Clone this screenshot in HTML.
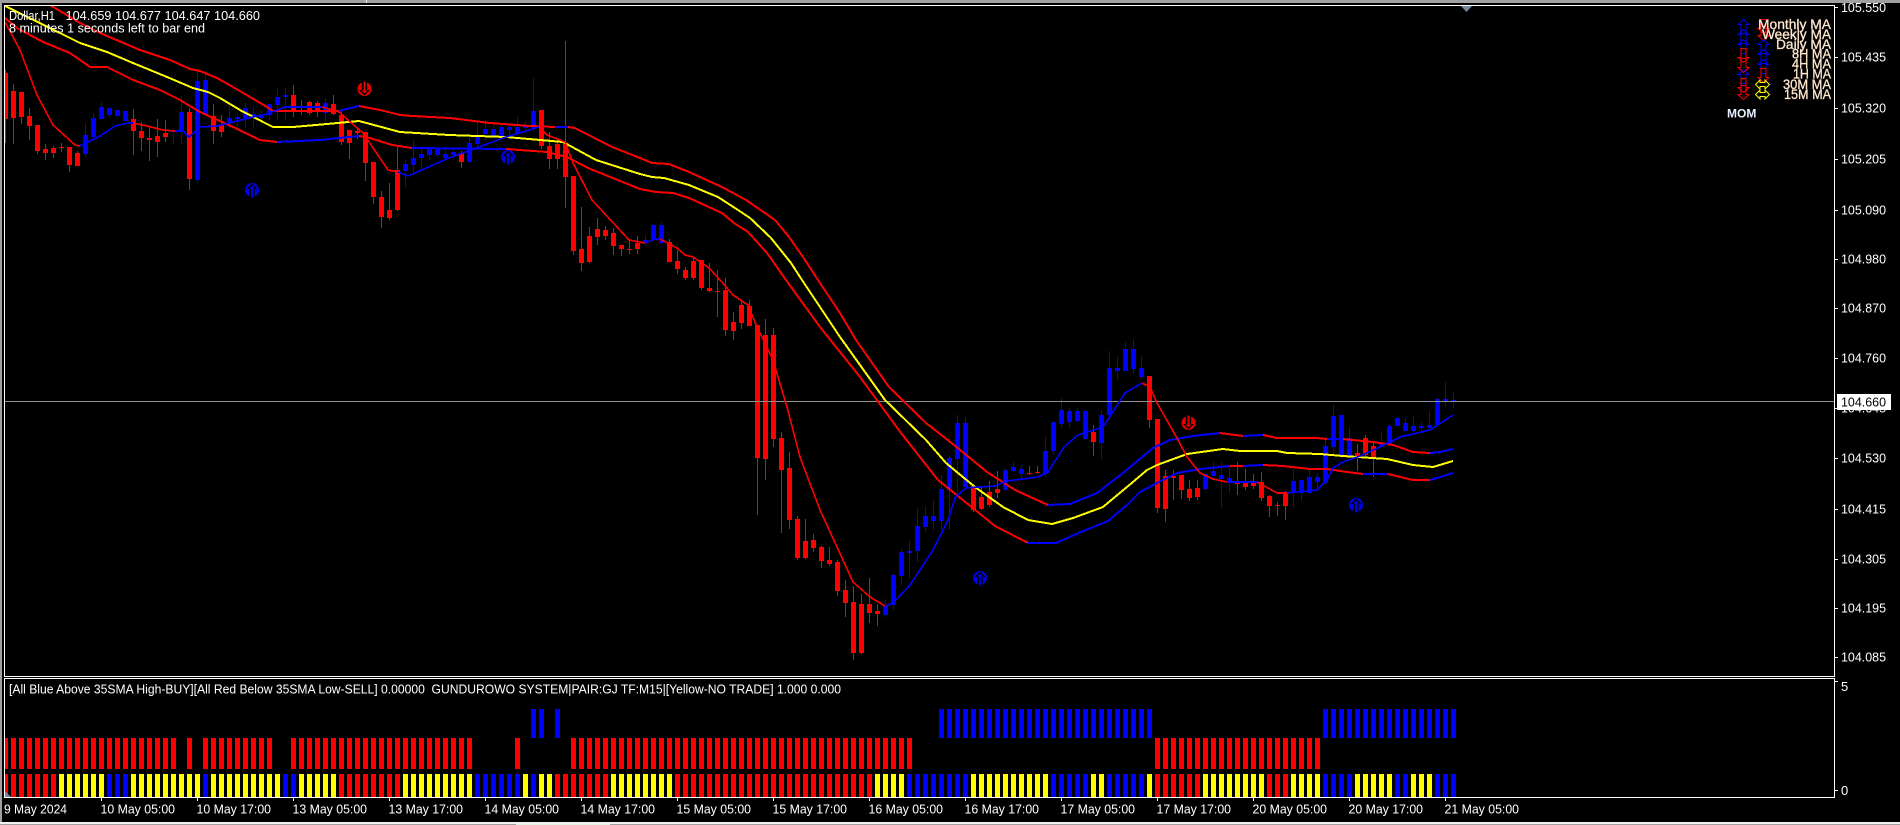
<!DOCTYPE html>
<html lang="en">
<head>
<meta charset="utf-8">
<title>Dollar,H1</title>
<style>
html,body{margin:0;padding:0;background:#000;width:1900px;height:825px;overflow:hidden}
svg{display:block}
text{font-family:"Liberation Sans",sans-serif;font-size:13px;fill:#fff}
</style>
</head>
<body>
<svg width="1900" height="825" viewBox="0 0 1900 825" xmlns="http://www.w3.org/2000/svg">
<defs>
<clipPath id="main"><rect x="5" y="6" width="1829" height="670"/></clipPath>
<clipPath id="sub"><rect x="5" y="679" width="1829" height="118"/></clipPath>
<g id="cu"><circle r="7" fill="#0000e6"/><path d="M0-6.5 5.5-1H2.7V7.5H-2.7V-1H-5.5Z" fill="#000"/><path d="M0-4.5 3-1.5H1V7.5H-1V-1.5H-3Z" fill="#0000e6"/></g>
<g id="cd"><circle r="7" fill="#e60000"/><path d="M0 6.5 5.5 1H2.7V-7.5H-2.7V1H-5.5Z" fill="#000"/><path d="M0 4.5 3 1.5H1V-7.5H-1V1.5H-3Z" fill="#e60000"/></g>
<path id="au" d="M0-7 5.5-2H2.5V7H-2.5V-2H-5.5Z" fill="none" stroke="#0000ff"/>
<path id="ad" d="M0 7 5.5 2H2.5V-7H-2.5V2H-5.5Z" fill="none" stroke="#ff0000"/>
<path id="ay" d="M-7 0-2.5-4.5V-2H2.5V-4.5L7 0 2.5 4.5V2H-2.5V4.5Z" fill="none" stroke="#ffff00"/>
</defs>

<!-- window chrome -->
<rect x="0" y="0" width="1900" height="3" fill="#a0a0a0"/>
<rect x="366" y="0" width="1" height="3" fill="#e8e8e8"/>
<rect x="0" y="0" width="2" height="825" fill="#a0a0a0"/>
<rect x="0" y="822" width="1900" height="2" fill="#f0f0f0"/>
<rect x="0" y="824" width="1900" height="1" fill="#a0a0a0"/>
<rect x="516" y="824" width="94" height="1" fill="#e0f0e0"/>

<!-- sub window bars -->
<g clip-path="url(#sub)" shape-rendering="crispEdges" fill="none">
<g stroke="#ff0000" stroke-width="31" stroke-dasharray="5 3">
<path d="M3 753.5H176M187 753.5H192M203 753.5H272M291 753.5H472M515 753.5H520M571 753.5H912M1155 753.5H1320"/>
</g>
<g stroke="#0000ff" stroke-width="29" stroke-dasharray="5 3">
<path d="M531 723.5H536M539 723.5H544M555 723.5H560M939 723.5H1152M1323 723.5H1456"/>
</g>
<g stroke-width="24" stroke-dasharray="5 3">
<path stroke="#ff0000" d="M3 786H56M339 786H400M555 786H608M675 786H872M1155 786H1200M1267 786H1288"/>
<path stroke="#ffff00" d="M59 786H104M131 786H200M211 786H280M299 786H336M403 786H472M523 786H528M539 786H552M611 786H672M875 786H904M971 786H1048M1091 786H1104M1147 786H1152M1203 786H1264M1291 786H1320M1355 786H1392M1411 786H1432"/>
<path stroke="#0000ff" d="M107 786H128M203 786H208M283 786H296M475 786H520M531 786H536M907 786H968M1051 786H1088M1107 786H1144M1323 786H1352M1395 786H1408M1435 786H1456"/>
</g>
</g>

<!-- candles -->
<g clip-path="url(#main)" shape-rendering="crispEdges" fill="none">
<path stroke="#ff0000" stroke-width="1" d="M5.5 70V143M13.5 84V144M21.5 92V124M29.5 108V140M37.5 125V154M45.5 144V160M53.5 146V158M61.5 143V152M69.5 147V172M77.5 151V166M133.5 109V155M141.5 122V151M149.5 126V161M157.5 119V157M165.5 120V142M189.5 108V190M213.5 104V144M221.5 115V137M293.5 85V117M301.5 100V115M309.5 101V115M317.5 101V117M333.5 95V115M341.5 109V145M349.5 130V159M357.5 129V139M365.5 132V181M373.5 162V204M381.5 191V228M389.5 183V220M397.5 147V211M461.5 151V168M541.5 110V149M549.5 132V169M557.5 140V169M565.5 41V208M573.5 176V255M581.5 207V271M589.5 227V263M597.5 218V245M605.5 226V240M613.5 228V255M621.5 245V256M629.5 240V254M637.5 236V254M669.5 239V262M677.5 250V274M685.5 267V280M693.5 257V280M701.5 260V290M709.5 263V292M717.5 270V317M725.5 278V336M733.5 312V340M741.5 300V329M749.5 300V326M757.5 325V515M765.5 319V480M773.5 328V447M781.5 432V533M789.5 452V529M797.5 516V560M805.5 519V559M813.5 534V552M821.5 546V568M829.5 547V566M837.5 560V596M845.5 580V617M853.5 586V660M861.5 594V654M869.5 578V623M877.5 604V626M973.5 484V512M981.5 486V510M989.5 481V507M997.5 471V498M1029.5 466V475M1037.5 466V474M1093.5 425V456M1149.5 376V428M1157.5 419V513M1165.5 470V522M1173.5 470V500M1181.5 475V499M1189.5 480V501M1197.5 480V500M1237.5 462V495M1245.5 469V490M1253.5 474V489M1261.5 472V501M1269.5 495V517M1277.5 502V516M1285.5 491V520M1357.5 444V471M1365.5 435V457M1373.5 443V477"/>
<path stroke="#ff0000" stroke-width="5" d="M5.5 73V119M13.5 91V118M21.5 92V117M29.5 116V126M37.5 125V151M45.5 149V153M53.5 148V153M61.5 147V148M69.5 147V165M77.5 153V166M133.5 119V131M141.5 131V138M149.5 138V140M157.5 136V142M165.5 133V137M189.5 112V179M213.5 116V131M221.5 125V132M293.5 95V112M301.5 110V112M309.5 102V113M317.5 103V112M333.5 104V114M341.5 115V142M349.5 130V143M357.5 131V133M365.5 132V163M373.5 162V197M381.5 197V217M389.5 210V218M397.5 170V210M461.5 153V162M541.5 110V146M549.5 146V159M557.5 144V159M565.5 144V177M573.5 176V251M581.5 249V263M589.5 236V262M597.5 229V237M605.5 230V236M613.5 233V246M621.5 245V249M629.5 249V250M637.5 243V249M669.5 242V262M677.5 261V269M685.5 270V278M693.5 261V278M701.5 260V288M709.5 288V291M717.5 291V292M725.5 290V330M733.5 322V331M741.5 305V323M749.5 306V326M757.5 325V458M765.5 335V459M773.5 335V439M781.5 438V470M789.5 468V520M797.5 519V558M805.5 541V558M813.5 540V548M821.5 547V561M829.5 560V564M837.5 562V591M845.5 590V603M853.5 602V653M861.5 604V653M869.5 604V613M877.5 611V614M973.5 486V510M981.5 497V509M989.5 492V505M997.5 489V493M1029.5 473V474M1037.5 472V473M1093.5 432V442M1149.5 376V420M1157.5 419V508M1165.5 476V509M1173.5 476V478M1181.5 475V490M1189.5 489V498M1197.5 488V497M1237.5 482V484M1245.5 483V487M1253.5 483V486M1261.5 482V498M1269.5 496V506M1277.5 505V506M1285.5 494V506M1357.5 453V457M1365.5 438V455M1373.5 446V457"/>
<path stroke="#0000ff" stroke-width="1" d="M85.5 123V157M93.5 113V140M101.5 102V120M109.5 108V117M117.5 110V117M125.5 111V122M173.5 130V144M181.5 96V143M197.5 70V183M205.5 71V116M229.5 106V128M237.5 113V127M245.5 103V128M253.5 106V127M261.5 110V125M269.5 104V120M277.5 89V120M285.5 88V121M325.5 98V122M405.5 160V187M413.5 140V175M421.5 149V170M429.5 147V160M437.5 147V157M445.5 149V160M453.5 149V158M469.5 135V163M477.5 122V150M485.5 120V140M493.5 124V137M501.5 124V137M509.5 124V138M517.5 117V140M525.5 121V133M533.5 78V132M645.5 235V246M653.5 224V241M661.5 222V244M885.5 599V617M893.5 574V610M901.5 549V585M909.5 541V579M917.5 508V562M925.5 506V532M933.5 500V530M941.5 475V530M949.5 455V530M957.5 415V497M965.5 417V487M1005.5 468V491M1013.5 462V472M1021.5 465V479M1045.5 437V477M1053.5 421V455M1061.5 398V428M1069.5 408V428M1077.5 408V422M1085.5 409V440M1101.5 410V459M1109.5 351V420M1117.5 357V380M1125.5 342V371M1133.5 339V374M1141.5 356V380M1205.5 473V490M1213.5 462V477M1221.5 462V508M1229.5 467V493M1293.5 469V508M1301.5 480V501M1309.5 469V494M1317.5 473V490M1325.5 440V485M1333.5 405V453M1341.5 415V455M1349.5 427V458M1381.5 433V447M1389.5 424V445M1397.5 417V426M1405.5 418V432M1413.5 416V432M1421.5 422V432M1429.5 411V429M1437.5 398V426M1445.5 382V407M1453.5 393V408"/>
<path stroke="#0000ff" stroke-width="5" d="M85.5 135V154M93.5 118V137M101.5 107V119M109.5 108V115M117.5 110V116M125.5 111V121M173.5 130V132M181.5 112V131M197.5 81V180M205.5 80V115M229.5 118V122M237.5 117V119M245.5 108V118M253.5 114V116M261.5 116V118M269.5 104V115M277.5 97V105M285.5 95V97M325.5 103V113M405.5 164V171M413.5 158V165M421.5 154V158M429.5 149V155M437.5 149V155M445.5 154V158M453.5 152V155M469.5 143V162M477.5 135V144M485.5 129V134M493.5 129V136M501.5 127V136M509.5 127V130M517.5 127V133M525.5 126V128M533.5 111V128M645.5 240V242M653.5 225V240M661.5 225V243M885.5 606V615M893.5 575V605M901.5 552V576M909.5 551V553M917.5 526V551M925.5 516V527M933.5 516V521M941.5 489V521M949.5 458V490M957.5 423V459M965.5 423V487M1005.5 470V490M1013.5 467V471M1021.5 469V474M1045.5 451V474M1053.5 422V451M1061.5 410V424M1069.5 411V422M1077.5 411V421M1085.5 411V439M1101.5 415V443M1109.5 368V415M1117.5 368V371M1125.5 349V371M1133.5 349V369M1141.5 368V377M1205.5 474V489M1213.5 471V476M1221.5 475V479M1229.5 478V482M1293.5 481V493M1301.5 480V493M1309.5 477V493M1317.5 477V482M1325.5 446V483M1333.5 416V447M1341.5 415V455M1349.5 438V456M1381.5 443V446M1389.5 426V444M1397.5 418V426M1405.5 423V431M1413.5 426V431M1421.5 426V428M1429.5 425V428M1437.5 399V425M1445.5 399V401M1453.5 400V402"/>

<!-- bid line -->
<path stroke="#909090" d="M5 401.5H1834"/>

<!-- band lines -->
<g stroke-width="2" stroke-linejoin="round">
<path stroke="#ff0000" d="M50 5 80 23 100 33 140 50 170 60 190 69 200 71 217 78 233 87 250 97 267 107 273 111 339 111M359 106 380 110 400 115 412 116 450 118 490 123 530 126 555 127M568 127 575 128 612 147 640 158 652 163 669 164 689 172 722 187 746 200 775 220 789 237 803 257 818 280 840 313 856 340 889 387 926 423 954 445 987 472 1015 490 1048 505M1220 433 1243 436M1263 435 1277 438 1317 438 1327 439M1343 439 1373 442 1393 445 1413 452 1430 453M5 18 17 28 43 42 70 53 90 67 107 67 133 80 160 90 180 100 200 112 233 127 260 140 277 142M359 136 370 138 392 145 412 148M506 149 547 152 567 157 588 168 640 189 656 192 673 193 689 198 722 213 734 223 748 232 767 253 786 280 820 327 860 377 901 433 938 480 979 513 995 526 1028 543M1230 466 1243 466M1263 465 1283 466 1310 469 1327 469 1347 472 1363 474M1388 474 1413 480 1430 480"/>
<path stroke="#0000ff" d="M339 111 359 106M555 127 568 127M1048 505 1070 504 1097 493 1123 473 1153 448 1170 440 1193 436 1220 433M1243 436 1263 435M1327 439 1343 439M1430 453 1440 452 1453 449M277 142 320 140 359 136M412 148 506 149M1028 543 1056 543 1081 532 1108 521 1127 505 1140 492 1157 483 1177 473 1200 469 1230 466M1243 466 1263 465M1363 474 1388 474M1430 480 1440 477 1453 473"/>
<path stroke="#ffff00" d="M5 6 60 33 80 43 107 52 133 63 167 77 193 88 208 92 220 98 240 110 263 122 273 127 293 127 327 124 359 121 400 132 449 135 506 137 563 142 596 160 640 174 652 177 664 178 689 185 718 197 738 210 750 218 771 238 791 263 802 280 840 337 885 400 926 440 946 463 975 487 1003 507 1028 520 1052 524 1073 518 1103 507 1127 487 1147 470 1157 465 1187 454 1223 449 1240 451 1277 451 1287 453 1320 454 1343 456 1387 459 1413 465 1433 467 1453 461"/>
</g>
<!-- fast line -->
<g stroke-width="1.6" stroke-linejoin="round">
<path stroke="#ff0000" d="M5 22 20 50 37 95 53 125 75 145 80 146M133 123 147 126 163 130 175 131M322 107 339 112 363 133 388 170 398 172M539 127 547 135 565 142 573 163 592 200 629 240 645 243M660 239 677 248 685 255 693 257 709 268 720 280 733 295 748 305 757 327 773 360 787 407 800 457 820 510 843 560 853 582 870 597 885 606M1142 383 1150 387 1157 403 1177 438 1187 457 1200 473 1213 479 1227 482M1257 482 1277 493 1287 493"/>
<path stroke="#0000ff" d="M80 146 100 136 115 126 128 123 133 123M175 131 183 131 189 137 200 127 217 126 233 122 253 117 267 114 285 107 322 107M398 172 408 176 449 158 506 137 539 127M645 243 654 239 660 239M885 606 893 603 910 585 933 550 948 520 955 498 960 493 966 488 995 486 1007 481 1038 477 1048 472 1064 447 1078 435 1103 427 1125 393 1142 383M1227 482 1257 482M1287 493 1317 490 1327 480 1333 468 1343 462 1360 456 1380 447 1400 437 1430 430 1453 415"/>
</g>
</g>

<!-- circled arrows -->
<use href="#cu" x="252" y="190"/>
<use href="#cu" x="508" y="157"/>
<use href="#cd" x="364.5" y="89"/>
<use href="#cu" x="980" y="578"/>
<use href="#cd" x="1188.5" y="423"/>
<use href="#cu" x="1356" y="505"/>

<!-- frames -->
<g fill="none" stroke="#fff" shape-rendering="crispEdges">
<rect x="4.5" y="5.5" width="1830" height="671"/>
<rect x="4.5" y="678.5" width="1830" height="119"/>
<path d="M1835 7.5H1838M1835 57.5H1838M1835 108.5H1838M1835 159.5H1838M1835 210.5H1838M1835 259.5H1838M1835 308.5H1838M1835 358.5H1838M1835 408.5H1838M1835 458.5H1838M1835 509.5H1838M1835 559.5H1838M1835 608.5H1838M1835 657.5H1838M1835 681.5H1838M1835 790.5H1838"/>
<path d="M101.5 798V801M197.5 798V801M293.5 798V801M389.5 798V801M485.5 798V801M581.5 798V801M677.5 798V801M773.5 798V801M869.5 798V801M965.5 798V801M1061.5 798V801M1157.5 798V801M1253.5 798V801M1349.5 798V801M1445.5 798V801"/>
</g>
<path d="M1461 6H1472L1466.5 12Z" fill="#778899"/>
<path d="M5 791 11 797H5Z" fill="#778899"/>

<!-- top-left labels -->
<text x="9" y="20" textLength="46" lengthAdjust="spacingAndGlyphs">Dollar,H1</text>
<text x="65.5" y="20" textLength="194.5" lengthAdjust="spacingAndGlyphs">104.659 104.677 104.647 104.660</text>
<text x="9" y="32.5" textLength="196" lengthAdjust="spacingAndGlyphs">8 minutes 1 seconds left to bar end</text>

<!-- sub window label -->
<text x="9" y="693.5" textLength="832" lengthAdjust="spacingAndGlyphs">[All Blue Above 35SMA High-BUY][All Red Below 35SMA Low-SELL] 0.00000&#160; GUNDUROWO SYSTEM|PAIR:GJ TF:M15|[Yellow-NO TRADE] 1.000 0.000</text>

<!-- price axis -->
<g>
<text x="1841" y="12" textLength="45" lengthAdjust="spacingAndGlyphs">105.550</text>
<text x="1841" y="61.5" textLength="45" lengthAdjust="spacingAndGlyphs">105.435</text>
<text x="1841" y="112.5" textLength="45" lengthAdjust="spacingAndGlyphs">105.320</text>
<text x="1841" y="163.5" textLength="45" lengthAdjust="spacingAndGlyphs">105.205</text>
<text x="1841" y="214.5" textLength="45" lengthAdjust="spacingAndGlyphs">105.090</text>
<text x="1841" y="263.5" textLength="45" lengthAdjust="spacingAndGlyphs">104.980</text>
<text x="1841" y="312.5" textLength="45" lengthAdjust="spacingAndGlyphs">104.870</text>
<text x="1841" y="362.5" textLength="45" lengthAdjust="spacingAndGlyphs">104.760</text>
<text x="1841" y="412.5" textLength="45" lengthAdjust="spacingAndGlyphs">104.645</text>
<text x="1841" y="462.5" textLength="45" lengthAdjust="spacingAndGlyphs">104.530</text>
<text x="1841" y="513.5" textLength="45" lengthAdjust="spacingAndGlyphs">104.415</text>
<text x="1841" y="563.5" textLength="45" lengthAdjust="spacingAndGlyphs">104.305</text>
<text x="1841" y="612.5" textLength="45" lengthAdjust="spacingAndGlyphs">104.195</text>
<text x="1841" y="661.5" textLength="45" lengthAdjust="spacingAndGlyphs">104.085</text>
<text x="1841" y="691">5</text>
<text x="1841" y="795">0</text>
</g>
<rect x="1837" y="394" width="54" height="16" fill="#fff"/>
<text x="1841" y="406.5" textLength="45" lengthAdjust="spacingAndGlyphs" style="fill:#000">104.660</text>

<!-- time axis -->
<g>
<text x="4" y="813.5" textLength="63" lengthAdjust="spacingAndGlyphs">9 May 2024</text>
<text x="100.5" y="813.5" textLength="74.5" lengthAdjust="spacingAndGlyphs">10 May 05:00</text>
<text x="196.5" y="813.5" textLength="74.5" lengthAdjust="spacingAndGlyphs">10 May 17:00</text>
<text x="292.5" y="813.5" textLength="74.5" lengthAdjust="spacingAndGlyphs">13 May 05:00</text>
<text x="388.5" y="813.5" textLength="74.5" lengthAdjust="spacingAndGlyphs">13 May 17:00</text>
<text x="484.5" y="813.5" textLength="74.5" lengthAdjust="spacingAndGlyphs">14 May 05:00</text>
<text x="580.5" y="813.5" textLength="74.5" lengthAdjust="spacingAndGlyphs">14 May 17:00</text>
<text x="676.5" y="813.5" textLength="74.5" lengthAdjust="spacingAndGlyphs">15 May 05:00</text>
<text x="772.5" y="813.5" textLength="74.5" lengthAdjust="spacingAndGlyphs">15 May 17:00</text>
<text x="868.5" y="813.5" textLength="74.5" lengthAdjust="spacingAndGlyphs">16 May 05:00</text>
<text x="964.5" y="813.5" textLength="74.5" lengthAdjust="spacingAndGlyphs">16 May 17:00</text>
<text x="1060.5" y="813.5" textLength="74.5" lengthAdjust="spacingAndGlyphs">17 May 05:00</text>
<text x="1156.5" y="813.5" textLength="74.5" lengthAdjust="spacingAndGlyphs">17 May 17:00</text>
<text x="1252.5" y="813.5" textLength="74.5" lengthAdjust="spacingAndGlyphs">20 May 05:00</text>
<text x="1348.5" y="813.5" textLength="74.5" lengthAdjust="spacingAndGlyphs">20 May 17:00</text>
<text x="1444.5" y="813.5" textLength="74.5" lengthAdjust="spacingAndGlyphs">21 May 05:00</text>
</g>

<!-- MA panel arrows -->
<use href="#au" x="1743.5" y="26.5"/>
<use href="#au" x="1743.5" y="36.5"/>
<use href="#au" x="1743.5" y="46.5"/>
<use href="#ad" x="1743.5" y="55.5"/>
<use href="#ad" x="1743.5" y="65.5"/>
<use href="#au" x="1743.5" y="76.5"/>
<use href="#ad" x="1743.5" y="85.5"/>
<use href="#ad" x="1743.5" y="92.5"/>
<use href="#ad" x="1763.5" y="26.5"/>
<use href="#ad" x="1763.5" y="33.5"/>
<use href="#au" x="1763.5" y="46.5"/>
<use href="#au" x="1763.5" y="56.5"/>
<use href="#au" x="1763.5" y="66.5"/>
<use href="#ad" x="1763.5" y="75.5"/>
<use href="#ay" x="1762.5" y="84.5"/>
<use href="#ay" x="1762.5" y="94.5"/>

<!-- MA panel text -->
<g style="stroke:#ffe8d0;stroke-width:.3">
<text x="1758" y="29" textLength="73" lengthAdjust="spacingAndGlyphs" style="font-size:14px;fill:#ffe8d0">Monthly MA</text>
<text x="1762" y="39" textLength="69" lengthAdjust="spacingAndGlyphs" style="font-size:14px;fill:#ffe8d0">Weekly MA</text>
<text x="1776" y="49" textLength="55" lengthAdjust="spacingAndGlyphs" style="font-size:14px;fill:#ffe8d0">Daily MA</text>
<text x="1792" y="58.5" textLength="39" lengthAdjust="spacingAndGlyphs" style="font-size:14px;fill:#ffe8d0">8H MA</text>
<text x="1792" y="68.5" textLength="39" lengthAdjust="spacingAndGlyphs" style="font-size:14px;fill:#ffe8d0">4H MA</text>
<text x="1793" y="78.5" textLength="38" lengthAdjust="spacingAndGlyphs" style="font-size:14px;fill:#ffe8d0">1H MA</text>
<text x="1783" y="89" textLength="48" lengthAdjust="spacingAndGlyphs" style="font-size:14px;fill:#ffe8d0">30M MA</text>
<text x="1784" y="99" textLength="47" lengthAdjust="spacingAndGlyphs" style="font-size:14px;fill:#ffe8d0">15M MA</text>
</g>
<text x="1727" y="117.5" style="font-size:12px;font-weight:bold;fill:#e4f0ff">MOM</text>
</svg>
</body>
</html>
